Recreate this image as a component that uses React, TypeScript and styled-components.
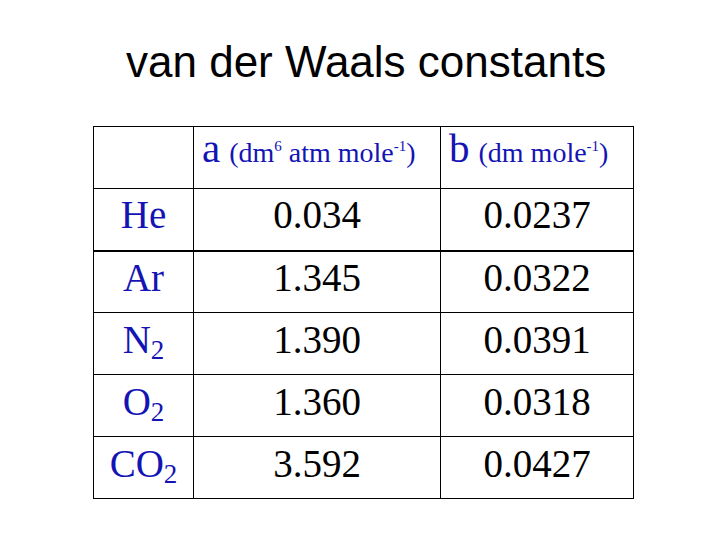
import React from "react";
import styled, { createGlobalStyle } from "styled-components";

const Global = createGlobalStyle`
  html, body { margin: 0; padding: 0; background: #ffffff; }
  body { width: 720px; height: 540px; overflow: hidden; }
`;

const Page = styled.div`
  width: 720px;
  height: 540px;
  display: flex;
  flex-direction: column;
  align-items: flex-start;
  background: #fff;
`;

const Title = styled.h1`
  margin: 0;
  padding: 36px 0 0 126px;
  font-family: "Liberation Sans", Arial, sans-serif;
  font-weight: normal;
  font-size: 44px;
  line-height: 52px;
  color: #000;
  white-space: nowrap;
`;

const Table = styled.table`
  margin: 38px 0 0 93px;
  width: 540px;
  border-collapse: collapse;
  table-layout: fixed;
  font-family: "Liberation Serif", "Times New Roman", serif;
`;

const Col = styled.col<{ $w: number }>`
  width: ${(p) => p.$w}px;
`;

const Row = styled.tr<{ $thick?: boolean }>`
  height: 62px;
  & > td {
    border-bottom: ${(p) => (p.$thick ? "2px" : "1px")} solid #000;
  }
`;

const Cell = styled.td`
  box-sizing: border-box;
  border: 1px solid #000;
  padding: 0 0 8px 0;
  text-align: center;
  vertical-align: middle;
  font-size: 39px;
  line-height: 42px;
  color: #000;
  white-space: nowrap;
  overflow: hidden;
`;

const HeadCell = styled(Cell)`
  padding: 0 0 14px 8px;
  text-align: left;
  color: #1414b4;
`;

const BigLetter = styled.span`
  font-size: 41px;
  margin-right: 9px;
`;

const Unit = styled.span`
  font-size: 28px;
`;

const Sup = styled.sup`
  font-size: 15px;
  vertical-align: 11px;
  line-height: 0;
`;

const Gas = styled.span`
  color: #1414b4;
`;

const Sub = styled.sub`
  font-size: 27px;
  vertical-align: -6px;
  line-height: 0;
`;

type GasRow = { name: string; sub?: string; a: string; b: string };

const rows: GasRow[] = [
  { name: "He", a: "0.034", b: "0.0237" },
  { name: "Ar", a: "1.345", b: "0.0322" },
  { name: "N", sub: "2", a: "1.390", b: "0.0391" },
  { name: "O", sub: "2", a: "1.360", b: "0.0318" },
  { name: "CO", sub: "2", a: "3.592", b: "0.0427" },
];

export default function App() {
  return (
    <>
      <Global />
      <Page>
        <Title>van der Waals constants</Title>
        <Table>
          <colgroup>
            <Col $w={100} />
            <Col $w={247} />
            <Col $w={193} />
          </colgroup>
          <tbody>
            <Row>
              <Cell />
              <HeadCell>
                <BigLetter>a</BigLetter>
                <Unit>
                  (dm<Sup>6</Sup> atm mole<Sup>-1</Sup>)
                </Unit>
              </HeadCell>
              <HeadCell>
                <BigLetter>b</BigLetter>
                <Unit>
                  (dm mole<Sup>-1</Sup>)
                </Unit>
              </HeadCell>
            </Row>
            {rows.map((r, i) => (
              <Row key={r.name + (r.sub || "")} $thick={i === 0}>
                <Cell>
                  <Gas>
                    {r.name}
                    {r.sub && <Sub>{r.sub}</Sub>}
                  </Gas>
                </Cell>
                <Cell>{r.a}</Cell>
                <Cell>{r.b}</Cell>
              </Row>
            ))}
          </tbody>
        </Table>
      </Page>
    </>
  );
}
